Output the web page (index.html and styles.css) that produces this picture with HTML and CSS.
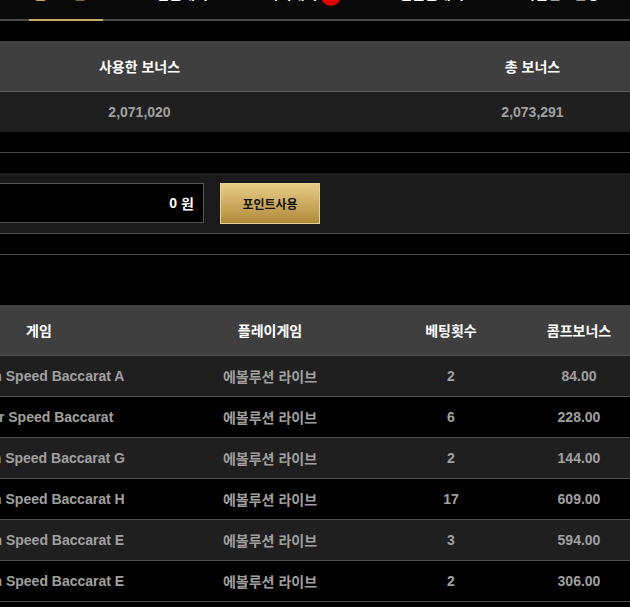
FILE: index.html
```html
<!DOCTYPE html>
<html lang="ko">
<head>
<meta charset="utf-8">
<title>콤프포인트</title>
<link rel="stylesheet" href="styles.css">
</head>
<body>
<nav class="tabs">
  <a class="tab active">콤프포인트</a>
  <a class="tab">입금내역</a>
  <a class="tab">쪽지내역<span class="badge">3</span></a>
  <a class="tab">입출금내역</a>
  <a class="tab">비밀번호변경</a>
</nav>

<section class="summary">
  <div class="sum-row sum-head">
    <div>보유 포인트</div>
    <div>사용한 보너스</div>
    <div>총 보너스</div>
  </div>
  <div class="sum-row sum-data">
    <div>2,271</div>
    <div>2,071,020</div>
    <div>2,073,291</div>
  </div>
</section>

<div class="rule rule-a"></div>

<section class="point-use">
  <div class="point-box"><span>0</span> <span>원</span></div>
  <button class="btn-gold">포인트사용</button>
</section>

<div class="rule rule-b"></div>

<section class="games">
  <div class="g-row g-head">
    <div>게임</div>
    <div>플레이게임</div>
    <div>베팅횟수</div>
    <div>콤프보너스</div>
  </div>
  <div class="g-row g-odd">
    <div>Korean Speed Baccarat A</div>
    <div>에볼루션 라이브</div>
    <div>2</div>
    <div>84.00</div>
  </div>
  <div class="g-row">
    <div>Super Speed Baccarat</div>
    <div>에볼루션 라이브</div>
    <div>6</div>
    <div>228.00</div>
  </div>
  <div class="g-row g-odd">
    <div>Korean Speed Baccarat G</div>
    <div>에볼루션 라이브</div>
    <div>2</div>
    <div>144.00</div>
  </div>
  <div class="g-row">
    <div>Korean Speed Baccarat H</div>
    <div>에볼루션 라이브</div>
    <div>17</div>
    <div>609.00</div>
  </div>
  <div class="g-row g-odd">
    <div>Korean Speed Baccarat E</div>
    <div>에볼루션 라이브</div>
    <div>3</div>
    <div>594.00</div>
  </div>
  <div class="g-row">
    <div>Korean Speed Baccarat E</div>
    <div>에볼루션 라이브</div>
    <div>2</div>
    <div>306.00</div>
  </div>
</section>
</body>
</html>
```
FILE: styles.css
```css
html, body {
  margin: 0;
  padding: 0;
  background: #000;
  overflow: hidden;
}
body {
  font-family: "Liberation Sans", "Noto Sans CJK KR", sans-serif;
  font-weight: bold;
  font-size: 14px;
  color: #a0a0a0;
}

/* tabs */
.tabs {
  margin-top: -30px;
  height: 49px;
  display: flex;
  align-items: flex-end;
  gap: 48px;
  padding-left: 29px;
  background: #0a0a0a;
  border-bottom: 2px solid #4a4a4a;
}
.tab {
  display: block;
  padding: 0 5px 15px;
  font-size: 14px;
  line-height: 20px;
  color: #fff;
  white-space: nowrap;
}
.tab.active {
  color: #c9a45c;
  border-bottom: 2px solid #c9aa66;
  margin-bottom: -2px;
}
.badge {
  display: inline-flex;
  align-items: center;
  justify-content: center;
  width: 20px;
  height: 20px;
  margin-left: 4px;
  border-radius: 50%;
  background: #e00000;
  color: #fff;
  font-size: 11px;
  vertical-align: bottom;
  position: relative;
  top: 2px;
}

/* summary */
.summary {
  margin: 20px 0 0 -450px;
  width: 1179px;
}
.sum-row {
  display: grid;
  grid-template-columns: 1fr 1fr 1fr;
  align-items: center;
  text-align: center;
}
.sum-head {
  height: 50px;
  background: #3f3f3f;
  color: #fff;
  border-bottom: 1px solid #5a5a5a;
}
.sum-data {
  height: 40px;
  background: #1f1f1f;
}

.rule {
  height: 1px;
  background: #4a4a4a;
}
.rule-a {
  margin-top: 20px;
}
.rule-b {
  margin-top: 20px;
}

/* point use */
.point-use {
  margin-top: 20px;
  height: 60px;
  background: #1a1a1a;
  border-bottom: 1px solid #4a4a4a;
  display: flex;
  align-items: center;
}
.point-box {
  box-sizing: border-box;
  width: 300px;
  height: 40px;
  margin-left: -96px;
  border: 1px solid #555;
  background: #000;
  color: #fff;
  display: flex;
  align-items: center;
  justify-content: flex-end;
  gap: 4px;
  padding-right: 9px;
}
.btn-gold {
  box-sizing: border-box;
  margin-left: 16px;
  width: 100px;
  height: 41px;
  border: 1px solid #e8d296;
  background: linear-gradient(#e8cd87, #b08a3a);
  color: #111;
  font-family: "Liberation Sans", "Noto Sans CJK KR", sans-serif;
  font-weight: bold;
  font-size: 12px;
  padding: 0;
}

/* games table */
.games {
  margin: 50px 0 0 -88px;
  width: 718px;
}
.g-row {
  display: grid;
  grid-template-columns: 254px 208px 154px 102px;
  height: 40px;
  align-items: center;
  text-align: center;
  border-bottom: 1px solid #505050;
  white-space: nowrap;
}
.g-head {
  height: 50px;
  background: #3f3f3f;
  color: #fff;
}
.g-odd {
  background: #1f1f1f;
}
```
